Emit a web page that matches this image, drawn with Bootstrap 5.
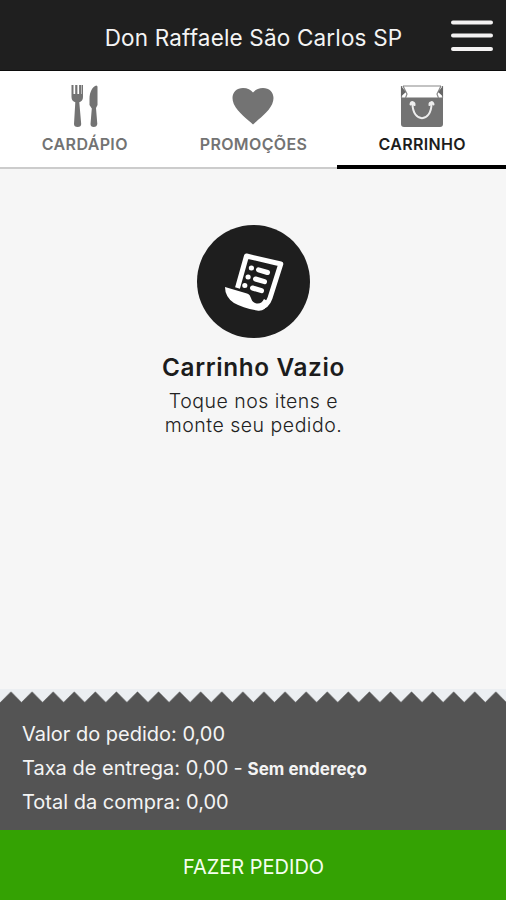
<!DOCTYPE html>
<html lang="pt-BR">
<head>
<meta charset="utf-8">
<meta name="viewport" content="width=device-width, initial-scale=1">
<title>Don Raffaele São Carlos SP</title>
<link href="https://cdn.jsdelivr.net/npm/bootstrap@5.3.0/dist/css/bootstrap.min.css" rel="stylesheet">
<style>
body{font-family:Inter,"Open Sans",sans-serif;background:#f6f6f6;height:900px;overflow:hidden}
.topbar{height:71px;background:#1f1f1f;color:#f4f4f4;border-bottom:1px solid #0c0c0c}
.brand-title{font-size:22.5px;line-height:28px;padding:6px 0 0 1px;letter-spacing:.17px;white-space:nowrap}
.menu-btn{width:44px;height:34px;right:12px;top:18px}
.tabs{height:98px;background:#fff}
.tabs .nav-link{height:98px;color:#737373;font-size:16px;font-weight:600;line-height:20px;letter-spacing:.36px;border-bottom:2px solid #ccc;border-radius:0;padding:13px 0 0}
.tabs .nav-link.active{color:#1d1d1d;border-bottom:4px solid #000}
.tabs svg{width:44px;height:44px;margin-bottom:6px}
.tabs span{padding-left:1px}
.round-icon{width:113px;height:113px;background:#1e1e1e;margin-top:56px}
.empty-title{font-size:24.3px;line-height:30px;font-weight:600;letter-spacing:.65px;color:#1c1c1c;margin-top:14px;padding-left:1px}
.empty-text{font-size:19.5px;line-height:24px;font-weight:300;letter-spacing:.5px;color:#222;margin-top:7px;padding-left:1px}
.zigzag{height:14px;background:#eceff2}
.totals{background:#545454;color:#f4f4f4;height:127px;padding:15px 22px 0;font-size:20px}
.totals p{line-height:33.5px;white-space:nowrap}
.totals strong{font-size:17px}
.totals .sep{letter-spacing:-.4px}
.order-btn{height:70px;background:#34a203;color:#f4fff0;font-size:20px;padding:7px 0 4px 1px}
</style>
</head>
<body class="d-flex flex-column">
<header class="topbar position-relative d-flex align-items-center justify-content-center flex-shrink-0">
  <h1 class="brand-title fw-normal m-0">Don Raffaele São Carlos SP</h1>
  <button class="menu-btn btn p-0 border-0 position-absolute d-flex" aria-label="Menu">
    <svg width="44" height="34" viewBox="0 0 44 34" stroke="#f4f2f2" stroke-width="4" stroke-linecap="round"><path d="M3 4.500H41M3 17.500H41M3 31H41"/></svg>
  </button>
</header>
<nav class="tabs nav nav-justified row g-0 flex-shrink-0">
  <a class="nav-link col-4 d-flex flex-column align-items-center" href="#">
    <svg viewBox="0 0 44 44" fill="#737373"><path d="M9.500 1h2v9h1.700V1h2.200v9h1.700V1h2.200v9h.5V1H21v12c0 3-1.500 4.500-3.700 5.200L19.200 40q0 3-3.600 3T12 40l1.300-21.800C11 17.500 9.500 16 9.500 13z"/><path d="M34.500 1.500c-4 1-7 6.500-7 13.500v6l2.300 3.500L28.500 40q0 3 3.200 3t3.600-3L34 24l1.500-3V2.500z"/></svg>
    <span>CARDÁPIO</span>
  </a>
  <a class="nav-link col-4 d-flex flex-column align-items-center" href="#">
    <svg viewBox="0 0 44 44" fill="#737373"><path d="M22 40.500C17 35.500 7 29 2.800 20C-1 11 4 4 12 4c4.500 0 8 2 10 4.500 2-2.500 5.500-4.500 10-4.500 8 0 13 7 9.200 16C37 29 27 35.500 22 40.500z"/></svg>
    <span>PROMOÇÕES</span>
  </a>
  <a class="nav-link active col-4 d-flex flex-column align-items-center" href="#">
    <svg viewBox="0 0 44 44"><path fill="#737373" d="M1 13.500H43V40Q43 43 40 43H4Q1 43 1 40z"/><path d="M3 2H41M1.500 2V14M42.500 2V14M3 2 7 10 5.500 14M41 2 37 10 38.500 14" fill="none" stroke="#888" stroke-width="1.200"/><path d="M1 2 6 8 1 12.500zM43 2 38 8 43 12.500z" fill="#666"/><path d="M10.500 20.500C11 17 15 17.500 14.500 21M29.500 21C29 17.500 33.500 17 33.500 20.500M12.500 19.500C12.500 39 31.500 39 31.500 19.500" fill="none" stroke="#eee" stroke-width="2" stroke-linecap="round"/></svg>
    <span>CARRINHO</span>
  </a>
</nav>
<main class="flex-grow-1 d-flex flex-column align-items-center text-center">
  <div class="round-icon rounded-circle flex-shrink-0">
    <svg class="d-block" width="113" height="113" viewBox="0 0 113 113"><path d="M40.500 63 49.500 31 83.800 39 73 73Q70 82 62 82.500" fill="none" stroke="#fff" stroke-width="5" stroke-linejoin="round"/><path d="M28 62 50 68.500C55 70 53 76 58 78Q64 80 67 74L72 77Q68 87 60 85.500Q46 83 37 78Q28 72 28 62z" fill="#fff"/><path d="M54.300 43h.2M51 52h.2M47.700 60.500h.2M61.500 44.800 70.500 47.500M58.500 54 67.500 56.700M55.500 63 64.500 65.700" fill="none" stroke="#fff" stroke-width="5" stroke-linecap="round"/></svg>
  </div>
  <h2 class="empty-title mb-0">Carrinho Vazio</h2>
  <p class="empty-text mb-0">Toque nos itens e<br>monte seu pedido.</p>
</main>
<footer class="flex-shrink-0">
  <svg class="zigzag d-block w-100" viewBox="0 0 506 14"><defs><pattern id="teeth" width="21.083" height="14" patternUnits="userSpaceOnUse"><path d="M0 13.500 11 2.500 21.083 12.700V14H0z" fill="#545454"/></pattern></defs><rect width="506" height="14" fill="url(#teeth)"/></svg>
  <div class="totals">
    <p class="mb-0">Valor do pedido: 0,00</p>
    <p class="mb-0">Taxa de entrega: 0,00<span class="sep"> - </span><strong>Sem endereço</strong></p>
    <p class="mb-0">Total da compra: 0,00</p>
  </div>
  <button class="order-btn btn w-100 rounded-0 border-0 d-flex align-items-center justify-content-center">FAZER PEDIDO</button>
</footer>
</body>
</html>
